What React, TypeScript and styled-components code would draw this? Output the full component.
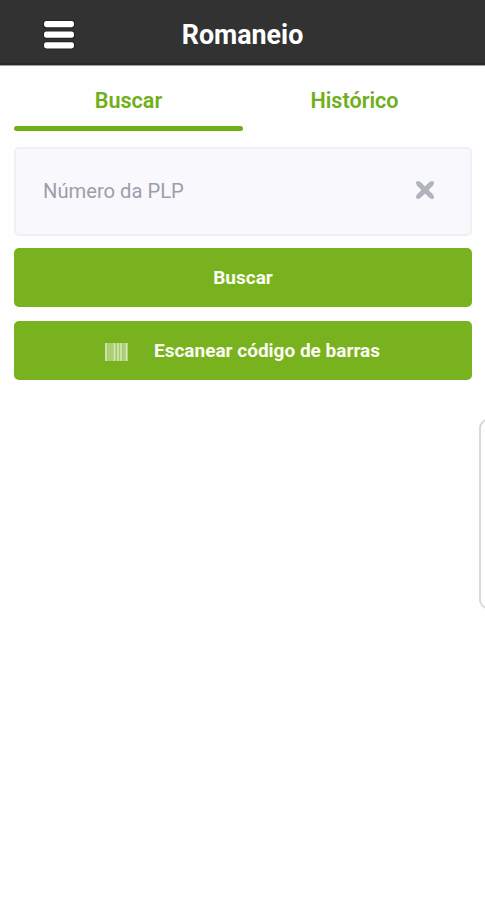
import React from "react";
import styled, { createGlobalStyle } from "styled-components";

const GlobalStyle = createGlobalStyle`
  * { box-sizing: border-box; }
  body { margin: 0; background: #fefefe; font-family: Roboto, "Liberation Sans", sans-serif; }
`;

const Screen = styled.div`
  position: relative;
  height: 900px;
  overflow: hidden;
  background: #fefefe;
`;

const Header = styled.header`
  display: grid;
  grid-template-columns: 117px 1fr 117px;
  height: 65px;
  padding-top: 5px;
  background: #323232;
  border-bottom: 2px solid #292929;
  box-shadow: 0 1px 0 #a0a0a0;
`;

const MenuButton = styled.button`
  display: flex;
  align-items: center;
  justify-content: center;
  padding: 0 0 2px;
  border: 0;
  background: none;
`;

const Title = styled.h1`
  margin: 0;
  color: #fff;
  font-size: 26.8px;
  font-weight: 700;
  line-height: 61px;
  text-align: center;
  white-space: nowrap;
`;

const Tabs = styled.nav`
  display: flex;
  height: 66px;
  padding: 0 13px 0 14px;
`;

const Tab = styled.button<{ $active?: boolean }>`
  display: flex;
  flex: 0 0 50%;
  flex-direction: column;
  align-items: center;
  padding: ${(p) => (p.$active ? "9px 0 0" : "9px 6px 0 0")};
  border: 0;
  background: none;
  color: #6fb01a;
  font-family: inherit;
  font-size: 21.6px;
  font-weight: 600;
`;

const TabLabel = styled.span`
  display: flex;
  flex: 1;
  align-items: center;
`;

const Indicator = styled.span<{ $visible?: boolean }>`
  width: 100%;
  height: 5px;
  border-radius: 3px;
  background: ${(p) => (p.$visible ? "#6fb015" : "transparent")};
`;

const Form = styled.main`
  display: flex;
  flex-direction: column;
  padding: 15.5px 13px 0 14px;
`;

const Field = styled.label`
  display: flex;
  align-items: center;
  height: 89px;
  padding: 0 35px 0 27px;
  border: 2px solid #eff0f3;
  border-radius: 5px;
  background: #f9f9fd;
  svg { margin-bottom: 2px; }
`;

const Input = styled.input`
  flex: 1;
  min-width: 0;
  height: 40px;
  padding: 0;
  border: 0;
  outline: 0;
  background: none;
  font-family: inherit;
  font-size: 20.2px;
  &::placeholder { color: #9b9fa9; opacity: 1; }
`;

const Action = styled.button<{ $gap: number }>`
  display: flex;
  align-items: center;
  justify-content: center;
  height: 59px;
  margin-top: ${(p) => p.$gap}px;
  padding: 0;
  border: 0;
  border-radius: 5px;
  background: #78b21e;
  color: #fbfdf3;
  font-family: inherit;
  font-size: 19px;
  font-weight: 700;
  white-space: nowrap;
  svg { margin: 3px 26px 0 -1px; }
`;

const EdgeHandle = styled.aside`
  position: absolute;
  top: 419px;
  right: -12px;
  width: 18px;
  height: 190px;
  border: 2px solid #d9d9d9;
  border-radius: 11px;
`;

const MenuIcon = () => (
  <svg width="32" height="30" viewBox="0 0 32 30">
    {[1, 11.6, 22.2].map((y) => (
      <React.Fragment key={y}>
        <rect x="0" y={y - 1} width="32" height="8.4" rx="3" fill="#232323" />
        <rect x="1" y={y} width="30" height="6.2" rx="2.4" fill="#fff" />
      </React.Fragment>
    ))}
  </svg>
);

const ClearIcon = () => (
  <svg width="20" height="20" viewBox="0 0 20 20">
    <path d="M3.2 3.2 16.8 16.8M16.8 3.2 3.2 16.8" stroke="#b1b4bc" strokeWidth="5" strokeLinecap="butt" />
    <path d="M3 3 17 17M17 3 3 17" stroke="#b1b4bc" strokeWidth="4" strokeLinecap="round" />
  </svg>
);

const BarcodeIcon = () => (
  <svg width="23" height="18" viewBox="0 0 23 18">
    <rect width="23" height="18" fill="#a5cc6a" />
    <path d="M1 0V18M9.5 0V18M13 0V18M16 0V18M21.5 0V18" stroke="#d3e7b5" strokeWidth="1.6" />
    <path d="M4 0V18M7 0V18M19 0V18" stroke="#b5d587" />
  </svg>
);

export default function App() {
  return (
    <>
      <GlobalStyle />
      <Screen>
        <Header>
          <MenuButton aria-label="Menu"><MenuIcon /></MenuButton>
          <Title>Romaneio</Title>
        </Header>
        <Tabs>
          <Tab $active><TabLabel>Buscar</TabLabel><Indicator $visible /></Tab>
          <Tab><TabLabel>Histórico</TabLabel><Indicator /></Tab>
        </Tabs>
        <Form>
          <Field>
            <Input placeholder="Número da PLP" />
            <ClearIcon />
          </Field>
          <Action $gap={12.5}>Buscar</Action>
          <Action $gap={14}><BarcodeIcon />Escanear código de barras</Action>
        </Form>
        <EdgeHandle />
      </Screen>
    </>
  );
}
